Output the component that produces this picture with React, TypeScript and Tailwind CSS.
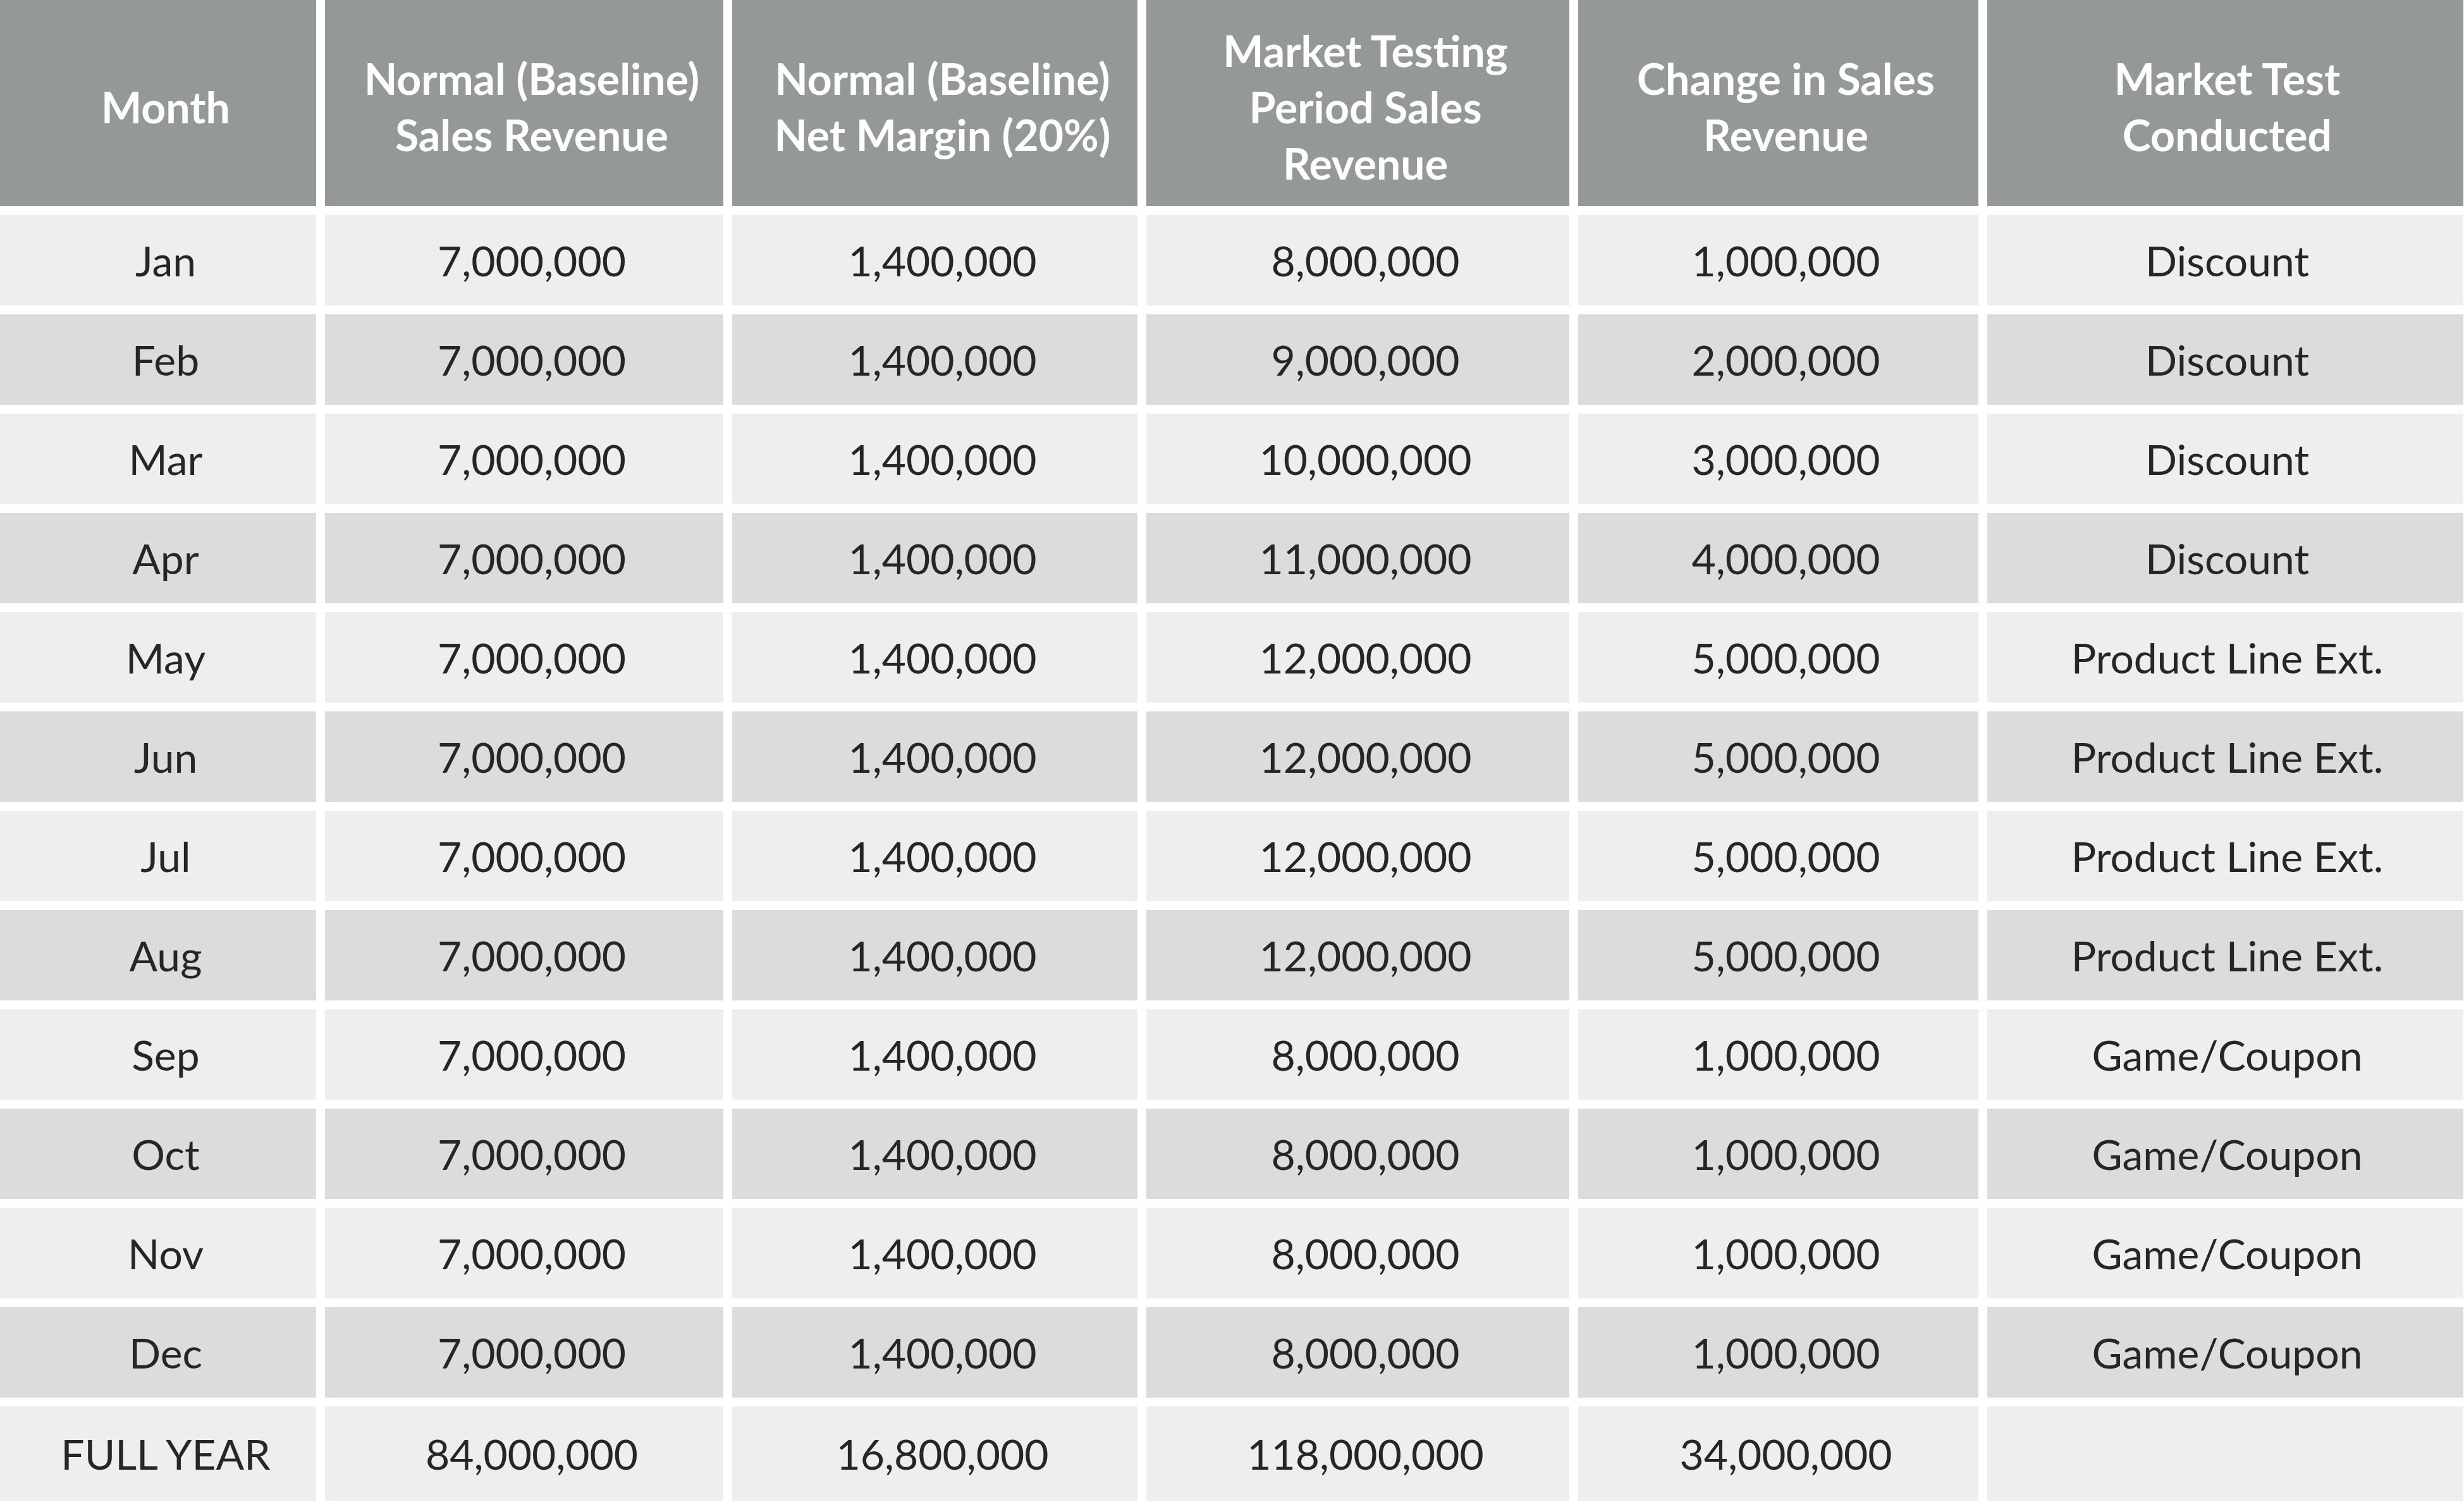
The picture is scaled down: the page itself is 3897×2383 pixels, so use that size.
const headers = [
  ["Month"],
  ["Normal (Baseline)", "Sales Revenue"],
  ["Normal (Baseline)", "Net Margin (20%)"],
  ["Market Testing", "Period Sales", "Revenue"],
  ["Change in Sales", "Revenue"],
  ["Market Test", "Conducted"],
];

const rows = [
  ["Jan", "7,000,000", "1,400,000", "8,000,000", "1,000,000", "Discount"],
  ["Feb", "7,000,000", "1,400,000", "9,000,000", "2,000,000", "Discount"],
  ["Mar", "7,000,000", "1,400,000", "10,000,000", "3,000,000", "Discount"],
  ["Apr", "7,000,000", "1,400,000", "11,000,000", "4,000,000", "Discount"],
  ["May", "7,000,000", "1,400,000", "12,000,000", "5,000,000", "Product Line Ext."],
  ["Jun", "7,000,000", "1,400,000", "12,000,000", "5,000,000", "Product Line Ext."],
  ["Jul", "7,000,000", "1,400,000", "12,000,000", "5,000,000", "Product Line Ext."],
  ["Aug", "7,000,000", "1,400,000", "12,000,000", "5,000,000", "Product Line Ext."],
  ["Sep", "7,000,000", "1,400,000", "8,000,000", "1,000,000", "Game/Coupon"],
  ["Oct", "7,000,000", "1,400,000", "8,000,000", "1,000,000", "Game/Coupon"],
  ["Nov", "7,000,000", "1,400,000", "8,000,000", "1,000,000", "Game/Coupon"],
  ["Dec", "7,000,000", "1,400,000", "8,000,000", "1,000,000", "Game/Coupon"],
];

const total = ["FULL YEAR", "84,000,000", "16,800,000", "118,000,000", "34,000,000", ""];

// cells carry a left inset, the last column a smaller one
const inset = (ci: number) => (ci === 5 ? "pl-[6px]" : "pl-[24px]");

export default function App() {
  return (
    <div className="w-[3897px] h-[2383px] bg-white font-['Lato','Open_Sans',sans-serif] text-[#262626]">
      <div className="grid grid-cols-[500px_630px_641px_669px_633px_753px] grid-rows-[326px_repeat(12,143px)_149px] gap-x-[14px] gap-y-[14px]">
        {/* Header */}
        {headers.map((lines, i) => (
          <div
            key={"h" + i}
            className={`${inset(i)} pt-[10px] bg-[#949997] flex flex-col items-center justify-center text-white font-bold text-[68px] leading-[89px] text-center`}
          >
            {lines.map((l) => (
              <span key={l}>{l}</span>
            ))}
          </div>
        ))}

        {/* Months */}
        {rows.map((r, ri) =>
          r.map((cell, ci) => (
            <div
              key={ri + "-" + ci}
              className={`${inset(ci)} ${ri % 2 === 0 ? "bg-[#edeeed]" : "bg-[#dbdddc]"} flex items-center justify-center text-[66px]`}
            >
              {cell}
            </div>
          ))
        )}

        {/* Full year */}
        {total.map((cell, ci) => (
          <div key={"t" + ci} className={`${inset(ci)} bg-[#edeeed] flex items-center justify-center text-[66px]`}>
            {cell}
          </div>
        ))}
      </div>
    </div>
  );
}
